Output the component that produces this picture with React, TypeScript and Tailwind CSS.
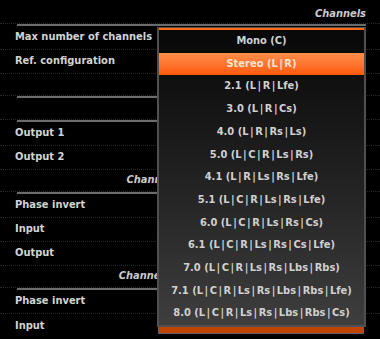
const options = [
  "Mono (C)",
  "Stereo (L|R)",
  "2.1 (L|R|Lfe)",
  "3.0 (L|R|Cs)",
  "4.0 (L|R|Rs|Ls)",
  "5.0 (L|C|R|Ls|Rs)",
  "4.1 (L|R|Ls|Rs|Lfe)",
  "5.1 (L|C|R|Ls|Rs|Lfe)",
  "6.0 (L|C|R|Ls|Rs|Cs)",
  "6.1 (L|C|R|Ls|Rs|Cs|Lfe)",
  "7.0 (L|C|R|Ls|Rs|Lbs|Rbs)",
  "7.1 (L|C|R|Ls|Rs|Lbs|Rbs|Lfe)",
  "8.0 (L|C|R|Ls|Rs|Lbs|Rbs|Cs)",
];

function Header({ title, first }: { title: string; first?: boolean }) {
  return (
    <div
      className={
        first
          ? "h-[22px] flex items-center justify-end pr-[14px] pt-[4px] border-b border-dotted border-[#262626]"
          : "h-[22px] flex items-center justify-end pr-[14px] border-b border-dotted border-[#262626]"
      }
    >
      <span className="italic font-bold text-[11px] text-[#cacaca] whitespace-nowrap">{title}</span>
    </div>
  );
}

function Rule() {
  return <div className="h-[2px] ml-[17px] mr-[14px] bg-[#6c6c6c]" />;
}

function Row({ label }: { label: string }) {
  return (
    <div className="h-[24px] flex items-center pl-[15px] border-b border-dotted border-[#2a2a2a]">
      <span className="font-bold text-[11px] text-[#d2d2d2] whitespace-nowrap">{label}</span>
    </div>
  );
}

// pipes in the channel layouts get a bit of air on each side
function Layout({ text }: { text: string }) {
  const parts = text.split("|");
  return (
    <span className="whitespace-nowrap">
      {parts.map((p, i) => (
        <span key={i}>
          {i > 0 && <span className="mx-[1.5px]">|</span>}
          {p}
        </span>
      ))}
    </span>
  );
}

export default function App() {
  return (
    <div className="relative w-[380px] h-[339px] bg-black overflow-hidden font-['DejaVu_Sans_Condensed','DejaVu_Sans',sans-serif]">
      <div className="flex flex-col">
        <div className="h-[2px]" />
        <Header title="Channels" first />
        <Rule />
        <Row label="Max number of channels" />
        <Row label="Ref. configuration" />
        <Header title="Routing" />
        <Rule />
        <Header title="Outputs" />
        <Rule />
        <Row label="Output 1" />
        <Row label="Output 2" />
        <Header title="Channel settings (Input 1 / Output 1 - Left)" />
        <Rule />
        <Row label="Phase invert" />
        <Row label="Input" />
        <Row label="Output" />
        <Header title="Channel settings (Input 2 / Output 2 - Right)" />
        <Rule />
        <Row label="Phase invert" />
        <div className="h-[24px] flex pl-[15px]">
          <span className="self-center font-bold text-[11px] text-[#d2d2d2]">Input</span>
          <div className="ml-auto mr-[16px] w-[206px] h-[20px] border border-[#606060] bg-[#c04300] flex items-center justify-center">
            <span className="font-bold text-[11px] text-white">Stereo</span>
          </div>
        </div>
      </div>

      <div className="absolute left-[157px] top-[27px] w-[209px] h-[300px] border-l-2 border-r-2 border-b-2 border-t border-[#505050] flex flex-col">
        <div className="h-[2px] bg-[#ff6a12]" />
        <div className="flex-1 flex flex-col bg-linear-to-b from-[#080808] to-[#3e3e3e]">
          {options.map((o, i) => (
            <div
              key={o}
              className={
                i === 1
                  ? "h-[22.7px] flex items-center justify-center font-bold text-[11px] text-[#fde4d2] bg-linear-to-b from-[#ff8e48] to-[#ff5800]"
                  : "h-[22.7px] flex items-center justify-center font-bold text-[11px] text-[#d0d0d0]"
              }
            >
              <Layout text={o} />
            </div>
          ))}
        </div>
      </div>
    </div>
  );
}
